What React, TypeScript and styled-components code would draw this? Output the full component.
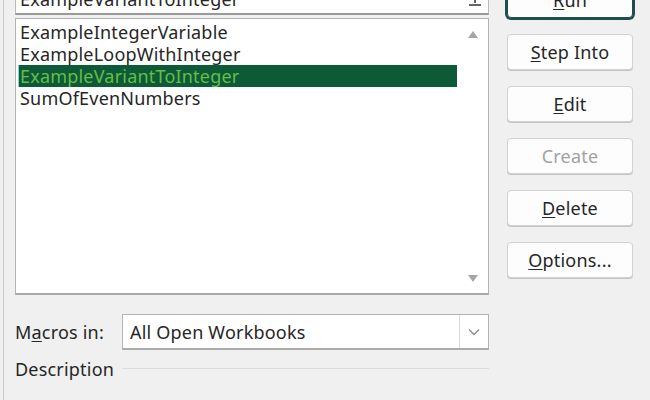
import React, { useState } from 'react';
import styled, { createGlobalStyle } from 'styled-components';

const GlobalStyle = createGlobalStyle`
  html, body {
    margin: 0;
    padding: 0;
    background: #f0f0f0;
    overflow: hidden;
  }
`;

const Frame = styled.div`
  width: 650px;
  height: 400px;
  overflow: hidden;
  background: #f0f0f0;
  font-family: 'Noto Sans', 'Open Sans', sans-serif;
  font-size: 18px;
  letter-spacing: 0.2px;
  color: #262626;
`;

const Dialog = styled.div`
  margin-left: 3px;
  width: 638px;
  height: 400px;
  border-left: 1px solid #cacaca;
  border-right: 1px solid #d4d4d4;
  display: grid;
  grid-template-columns: 474px 126px;
  column-gap: 18px;
  padding-left: 11px;
  align-items: start;
`;

const LeftColumn = styled.div`
  display: flex;
  flex-direction: column;
  margin-top: -17px;
`;

const NameBox = styled.div`
  height: 29px;
  display: flex;
  align-items: center;
  background: #fff;
  border: 1px solid #b8b8b8;
  border-bottom: 2px solid #9a9a9a;
  padding-left: 4px;
`;

const NameText = styled.span`
  flex: 1;
`;

const CollapseButton = styled.span`
  width: 26px;
  height: 100%;
  display: flex;
  align-items: center;
  justify-content: center;
`;

const ListBox = styled.div`
  margin-top: 3px;
  height: 274px;
  background: #fff;
  border: 1px solid #b4b4b4;
  border-bottom: 2px solid #a8a8a8;
  display: flex;
`;

const Items = styled.div`
  flex: 1;
  padding: 2px 0 0 2px;
  display: flex;
  flex-direction: column;
`;

const Item = styled.div<{ $selected?: boolean }>`
  height: 22px;
  line-height: 22px;
  padding-left: 2px;
  white-space: nowrap;
  background: ${(p) => (p.$selected ? '#0d5a37' : 'transparent')};
  color: ${(p) => (p.$selected ? '#66bd48' : '#262626')};
  box-shadow: ${(p) => (p.$selected ? 'inset 1px 0 0 #7fd6d0' : 'none')};
`;

const ScrollBar = styled.div`
  width: 31px;
  display: flex;
  flex-direction: column;
  justify-content: space-between;
  align-items: center;
  padding: 12px 0 11px;
`;

const MacrosRow = styled.div`
  margin-top: 19px;
  display: flex;
  align-items: center;
  height: 36px;
`;

const Label = styled.span`
  width: 107px;
  flex-shrink: 0;
  white-space: nowrap;
`;

const Key = styled.span`
  text-decoration: underline;
  text-underline-offset: 2px;
`;

const Select = styled.div`
  flex: 1;
  height: 100%;
  display: flex;
  background: #fff;
  border: 1px solid #b4b4b4;
  border-bottom: 2px solid #ababab;
  box-sizing: border-box;
`;

const SelectValue = styled.span`
  flex: 1;
  display: flex;
  align-items: center;
  padding-left: 7px;
`;

const SelectArrow = styled.span`
  width: 28px;
  display: flex;
  align-items: center;
  justify-content: center;
  border-left: 1px solid #dadada;
`;

const DescriptionRow = styled.div`
  margin-top: 5px;
  display: flex;
  align-items: center;
  height: 28px;
`;

const GroupLine = styled.span`
  flex: 1;
  height: 1px;
  margin-top: -2px;
  background: #dcdcdc;
`;

const ButtonColumn = styled.div`
  display: flex;
  flex-direction: column;
  gap: 16px;
  margin-top: -18px;
`;

const Button = styled.button<{ $primary?: boolean }>`
  height: 36px;
  font-family: inherit;
  font-size: 18px;
  letter-spacing: 0.2px;
  color: ${(p) => (p.disabled ? '#a2a2a2' : '#262626')};
  background: #fdfdfd;
  border: 1px solid ${(p) => (p.$primary ? '#1f4f4c' : '#d2d2d2')};
  border-radius: 4px;
  box-shadow: ${(p) => (p.$primary ? '0 0 0 2px #1f4f4c' : '0 1px 0 #c4c4c4')};
  padding: 0;
`;

const macros = [
  'ExampleIntegerVariable',
  'ExampleLoopWithInteger',
  'ExampleVariantToInteger',
  'SumOfEvenNumbers',
];

const Triangle: React.FC<{ down?: boolean }> = ({ down }) => (
  <svg width="10" height="7" viewBox="0 0 10 7">
    <path d={down ? 'M0 0 H10 L5 7 Z' : 'M0 7 H10 L5 0 Z'} fill="#a6a6a6" />
  </svg>
);

const App: React.FC = () => {
  const [selected, setSelected] = useState<number>(2);

  return (
    <Frame>
      <GlobalStyle />
      <Dialog>
        <LeftColumn>
          <NameBox>
            <NameText>{macros[selected]}</NameText>
            <CollapseButton>
              <svg width="14" height="16" viewBox="0 0 14 16">
                <path d="M7 2 V12 M3 6 L7 2 L11 6 M1 14 H13" stroke="#333" strokeWidth="1.5" fill="none" />
              </svg>
            </CollapseButton>
          </NameBox>
          <ListBox>
            <Items>
              {macros.map((m, i) => (
                <Item key={m} $selected={i === selected} onClick={() => setSelected(i)}>
                  {m}
                </Item>
              ))}
            </Items>
            <ScrollBar>
              <Triangle />
              <Triangle down />
            </ScrollBar>
          </ListBox>
          <MacrosRow>
            <Label>
              M<Key>a</Key>cros in:
            </Label>
            <Select>
              <SelectValue>All Open Workbooks</SelectValue>
              <SelectArrow>
                <svg width="12" height="8" viewBox="0 0 12 8">
                  <path d="M1 1.5 L6 6.5 L11 1.5" stroke="#8a8a8a" strokeWidth="1.3" fill="none" />
                </svg>
              </SelectArrow>
            </Select>
          </MacrosRow>
          <DescriptionRow>
            <Label>Description</Label>
            <GroupLine />
          </DescriptionRow>
        </LeftColumn>
        <ButtonColumn>
          <Button $primary>
            <Key>R</Key>un
          </Button>
          <Button>
            <Key>S</Key>tep Into
          </Button>
          <Button>
            <Key>E</Key>dit
          </Button>
          <Button disabled>Create</Button>
          <Button>
            <Key>D</Key>elete
          </Button>
          <Button>
            <Key>O</Key>ptions...
          </Button>
        </ButtonColumn>
      </Dialog>
    </Frame>
  );
};

export default App;
